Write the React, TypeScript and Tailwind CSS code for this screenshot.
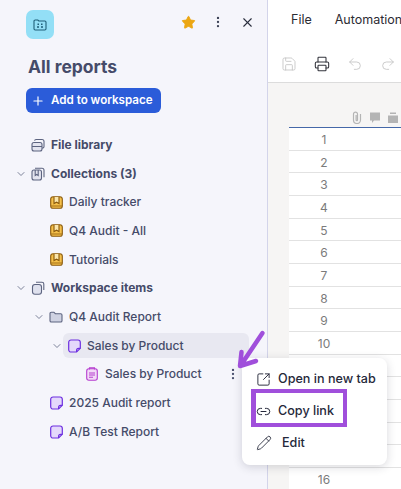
import { EllipsisVertical, ChevronDown, Plus, Printer, Redo2, Save, Star, Undo2, X, SquareArrowOutUpRight, Link2, Pencil } from "lucide-react";
import type { ReactNode } from "react";

const indent = ["pl-[15px]", "pl-[33px]", "pl-[51px]", "pl-[69px]"];

function StackIcon() {
  return (
    <svg width="14" height="14" viewBox="0 0 14 14" fill="none" stroke="#5d6480" strokeWidth="1.1">
      <rect x="1" y="4.5" width="10" height="8.5" rx="2" fill="#e3e4ef" />
      <path d="M3.5 2.7A1.7 1.7 0 0 1 5 1.5h6a2 2 0 0 1 2 2v5a1.6 1.6 0 0 1-2 1.5M1 8.5h10" />
    </svg>
  );
}

function CollectionsIcon() {
  return (
    <svg width="14" height="14" viewBox="0 0 14 14" fill="none" stroke="#5d6480" strokeWidth="1.1">
      <rect x="1" y="3" width="9.5" height="10" rx="2" fill="#e3e4ef" />
      <path d="M4 1.2h7a2 2 0 0 1 2 2v7" />
      <path d="M4.2 3v5.5l1.5-1 1.5 1V3" />
    </svg>
  );
}

function ItemsIcon() {
  return (
    <svg width="14" height="14" viewBox="0 0 14 14" fill="none" stroke="#5d6480" strokeWidth="1.1">
      <path d="M5 1.2h6a1.8 1.8 0 0 1 1.8 1.8v6" />
      <rect x="1.5" y="3.5" width="9" height="9.8" rx="2.5" fill="#dfe1ee" />
    </svg>
  );
}

function BookIcon() {
  return (
    <svg width="13" height="13" viewBox="0 0 13 13" fill="none" stroke="#8a5a0c" strokeWidth="1.1">
      <rect x="0.7" y="0.7" width="11.6" height="11.6" rx="2.4" fill="#f5c04a" />
      <path d="M4 1v6.5l2.5-1.3L9 7.5V1" fill="#fbe6ac" />
      <path d="M1 10h11" stroke="#a8741a" />
    </svg>
  );
}

function FolderIcon() {
  return (
    <svg width="14" height="14" viewBox="0 0 14 14" fill="#cfd2e2" stroke="#5d6480" strokeWidth="1.1">
      <path d="M1 3.5A1.3 1.3 0 0 1 2.3 2.2h2.6l1.4 1.5h5.4A1.3 1.3 0 0 1 13 5v5.7a1.3 1.3 0 0 1-1.3 1.3H2.3A1.3 1.3 0 0 1 1 10.7z" />
    </svg>
  );
}

function ReportIcon() {
  return (
    <svg width="13" height="14" viewBox="0 0 13 14" fill="none" stroke="#6d2fe0" strokeWidth="1.2">
      <path d="M3 1h7a2.3 2.3 0 0 1 2.3 2.3v6L8.6 13H3a2.3 2.3 0 0 1-2.3-2.3V3.3A2.3 2.3 0 0 1 3 1z" fill="#e4d8fb" />
      <path d="M8.6 13v-1.7a2 2 0 0 1 2-2h1.7" />
    </svg>
  );
}

function SheetIcon() {
  return (
    <svg width="12" height="14" viewBox="0 0 12 14" fill="none" stroke="#b63fd0" strokeWidth="1.1">
      <rect x="0.7" y="1.8" width="10.6" height="11.5" rx="2.2" fill="#f2d9f7" />
      <path d="M3.5 2.5V.9h5v1.6M3 6h6M3 8h6M3 10.2h4" />
    </svg>
  );
}

function Row({ depth, chevron, icon, bold, active, children }: { depth: number; chevron?: boolean; icon: ReactNode; bold?: boolean; active?: boolean; children: ReactNode }) {
  return (
    <div className={`relative flex h-[28.7px] items-center ${indent[depth]}`}>
      <span className="flex w-3 shrink-0 justify-center">
        {chevron && <ChevronDown size={12} strokeWidth={1.6} className="text-[#5d6480]" />}
      </span>
      <span className={`flex h-[25px] items-center rounded-md ${active ? "w-[186px] bg-[#e8e8f1] pl-1" : "ml-1"}`}>
        <span className="flex w-[14px] shrink-0 justify-center">{icon}</span>
        <span className={`ml-[6px] whitespace-nowrap text-[12px] text-[#454b69] ${bold ? "font-bold" : "font-medium"}`}>{children}</span>
      </span>
    </div>
  );
}

function MenuItem({ icon, children, boxed, wide }: { icon: ReactNode; children: ReactNode; boxed?: boolean; wide?: boolean }) {
  return (
    <div className={`flex h-[32px] items-center pl-[13px] text-[12.6px] font-medium text-[#25283a] ${boxed ? "relative" : ""}`}>
      <span className="flex w-[17px] justify-center">{icon}</span>
      <span className={`whitespace-nowrap ${wide ? "ml-[10px]" : "ml-[6px]"}`}>{children}</span>
      {boxed && <span className="absolute bottom-0 left-[9px] top-[-6px] w-[96px] border-4 border-l-[5px] border-[#a04fdb]" />}
    </div>
  );
}

const lines = Array.from({ length: 16 }, (_, i) => i + 1);

export default function App() {
  return (
    <div className="relative flex h-[489px] w-[401px] overflow-hidden bg-white font-['Inter',sans-serif]">
      <aside className="w-[268px] shrink-0 border-r border-[#d3d4ea] bg-[#f5f5fb]">
        <div className="flex items-start pl-[26px] pr-[12px] pt-[10px]">
          <div className="flex h-[29px] w-[28px] items-center justify-center rounded-[7px] bg-[#93dff6]">
            <svg width="14" height="12" viewBox="0 0 14 12" fill="none" stroke="#1f5f78" strokeWidth="1.1">
              <path d="M1 2.2A1.2 1.2 0 0 1 2.2 1h2.6l1 1h6A1.2 1.2 0 0 1 13 3.2v6.6A1.2 1.2 0 0 1 11.8 11H2.2A1.2 1.2 0 0 1 1 9.8z" />
              <path d="M4.5 5.2h1.5M8 5.2h1.5M4 8h2M8 8h2" strokeWidth="1.5" />
            </svg>
          </div>
          <div className="ml-auto flex h-[24px] items-center">
            <Star size={15} fill="#eca612" strokeWidth={1.5} className="text-[#eca612]" />
            <EllipsisVertical size={14} strokeWidth={2} className="ml-[15px] text-[#3d4257]" />
            <X size={15} strokeWidth={1.8} className="ml-[15px] text-[#2b2f3f]" />
          </div>
        </div>
        <h1 className="ml-[28px] mt-[17px] text-[17.5px] font-bold leading-[22px] text-[#454b69]">All reports</h1>
        <button className="ml-[26px] mt-[10px] flex h-[25px] w-[135px] items-center rounded-[6px] bg-[#2b5cd9] pl-[5px] text-[11.6px] font-semibold text-white">
          <Plus size={14} strokeWidth={2} />
          <span className="ml-[6px] whitespace-nowrap">Add to workspace</span>
        </button>
        <nav className="mt-[17.5px]">
          <Row depth={0} icon={<StackIcon />} bold>File library</Row>
          <Row depth={0} chevron icon={<CollectionsIcon />} bold>Collections (3)</Row>
          <Row depth={1} icon={<BookIcon />}>Daily tracker</Row>
          <Row depth={1} icon={<BookIcon />}>Q4 Audit - All</Row>
          <Row depth={1} icon={<BookIcon />}>Tutorials</Row>
          <Row depth={0} chevron icon={<ItemsIcon />} bold>Workspace items</Row>
          <Row depth={1} chevron icon={<FolderIcon />}>Q4 Audit Report</Row>
          <Row depth={2} chevron active icon={<ReportIcon />}>Sales by Product</Row>
          <div className="relative">
            <Row depth={3} icon={<SheetIcon />}>Sales by Product</Row>
            <EllipsisVertical size={14} strokeWidth={2} className="absolute left-[226px] top-[7px] text-[#4b5270]" />
          </div>
          <Row depth={1} icon={<ReportIcon />}>2025 Audit report</Row>
          <Row depth={1} icon={<ReportIcon />}>A/B Test Report</Row>
        </nav>
      </aside>

      <main className="flex min-w-0 flex-1 flex-col">
        <div className="flex h-[41px] shrink-0 items-center whitespace-nowrap pl-[23px] text-[12.5px] text-[#2c2c34]">
          <span>File</span>
          <span className="ml-[23px]">Automation</span>
        </div>
        <div className="flex h-[42px] shrink-0 items-center gap-[17px] border-b border-[#dcdcdc] pl-[13px] pt-[5px]">
          <Save size={16} strokeWidth={1.3} className="shrink-0 text-[#c4c4c4]" />
          <Printer size={16} strokeWidth={1.6} className="shrink-0 text-[#33343c]" />
          <Undo2 size={16} strokeWidth={1.3} className="shrink-0 text-[#c4c4c4]" />
          <Redo2 size={16} strokeWidth={1.3} className="shrink-0 text-[#c4c4c4]" />
        </div>
        <div className="flex-1 overflow-hidden bg-[#f6f5f4] pl-[21px]">
          <div className="flex h-[44px] items-end gap-[6px] pb-[3px] pl-[62px]">
            <svg width="12" height="13" viewBox="0 0 12 13" className="shrink-0" fill="none" stroke="#b4b4b4" strokeWidth="1.2">
              <path d="M9.5 3v6a3.5 3.5 0 0 1-7 0V3.2a2 2 0 0 1 4 0V9a.7.7 0 0 1-1.4 0V4" />
            </svg>
            <svg width="12" height="13" viewBox="0 0 12 13" className="shrink-0" fill="#b4b4b4"><path d="M1 1.5h10v8H5L3 12V9.5H1z" /></svg>
            <svg width="12" height="13" viewBox="0 0 12 13" className="shrink-0" fill="#b4b4b4"><path d="M3 1.5h6V3H3zM1 4.5h10v7.5H1z" /></svg>
          </div>
          <div className="border-t border-[#4568a8] bg-white">
            {lines.map((n) => (
              <div key={n} className="h-[22.67px] border-b border-[#e2e2e2]">
                {(n < 11 || n > 15) && (
                  <div className="w-[70px] text-center text-[12px] leading-[24px] text-[#7b7b7b]">{n}</div>
                )}
              </div>
            ))}
          </div>
        </div>
      </main>

      <div className="absolute left-[242px] top-[358px] w-[145px] rounded-[8px] bg-white pb-[6px] pt-[5px] shadow-[0_2px_10px_rgba(40,40,60,0.18)]">
        <MenuItem icon={<SquareArrowOutUpRight size={15} strokeWidth={1.5} />}>Open in new tab</MenuItem>
        <MenuItem boxed icon={<Link2 size={15} strokeWidth={1.6} />}>Copy link</MenuItem>
        <MenuItem wide icon={<Pencil size={16} strokeWidth={1.3} />}>Edit</MenuItem>
      </div>

      <svg className="absolute left-[232px] top-[326px]" width="40" height="48" viewBox="0 0 40 48" fill="none" stroke="#a04fdb" strokeWidth="4.5" strokeLinecap="round" strokeLinejoin="round">
        <path d="M30.5 7 9 39M9.5 26 8 40l16-5" />
      </svg>
    </div>
  );
}
